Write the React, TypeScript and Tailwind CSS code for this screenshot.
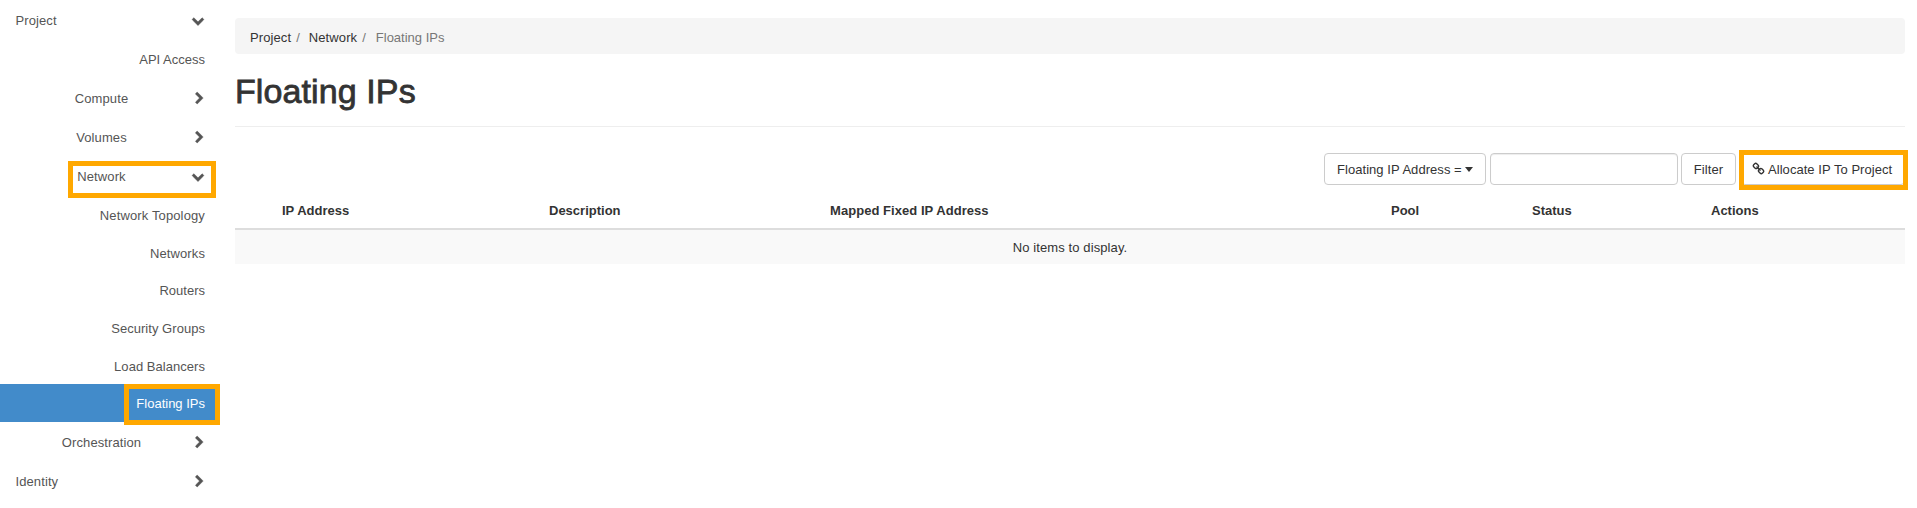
import type { ReactNode } from "react";

const CHEVRON_DOWN =
  "M1683 808l-742 741q-19 19-45 19t-45-19l-742-741q-19-19-19-45.500t19-45.500l166-165q19-19 45-19t45 19l531 531 531-531q19-19 45-19t45 19l166 165q19 19 19 45.500t-19 45.500z";
const CHEVRON_RIGHT =
  "M1363 877l-742 742q-19 19-45 19t-45-19l-166-166q-19-19-19-45t19-45l531-531-531-531q-19-19-19-45t19-45l166-166q19-19 45-19t45 19l742 742q19 19 19 45t-19 45z";
const LINK =
  "M1520 1216q0-40-28-68l-208-208q-28-28-68-28-42 0-72 32 3 3 19 18.500t21.500 21.500 15 19 13 25.500 3.500 27.500q0 40-28 68t-68 28q-15 0-27.500-3.500t-25.500-13-19-15-21.500-21.500-18.500-19q-33 31-33 73 0 40 28 68l206 207q27 27 68 27 40 0 68-26l147-146q28-28 28-67zm-703-705q0-40-28-68l-206-207q-28-28-68-28-39 0-68 27l-147 146q-28 28-28 67 0 40 28 68l208 208q27 27 68 27 42 0 72-31-3-3-19-18.500t-21.500-21.500-15-19-13-25.500-3.500-27.500q0-40 28-68t68-28q15 0 27.500 3.500t25.500 13 19 15 21.500 21.500 18.500 19q33-31 33-73zm895 705q0 120-85 203l-147 146q-83 83-203 83-121 0-204-85l-206-207q-83-83-83-203 0-123 88-209l-88-88q-86 88-208 88-120 0-204-84l-208-208q-84-84-84-204t85-203l147-146q83-83 203-83 121 0 204 85l206 207q83 83 83 203 0 123-88 209l88 88q86-88 208-88 120 0 204 84l208 208q84 84 84 204z";

function Icon({ d, className = "" }: { d: string; className?: string }) {
  return (
    <svg viewBox="0 0 1792 1792" className={`size-[13px] shrink-0 overflow-visible fill-current ${className}`} aria-hidden="true">
      <path d={d} />
    </svg>
  );
}

function Highlight({ className }: { className: string }) {
  return <span className={`pointer-events-none absolute border-5 border-[#ffa800] ${className}`} />;
}

function Section({
  label,
  level,
  open = false,
  children,
}: {
  label: string;
  level: "root" | "group";
  open?: boolean;
  children?: ReactNode;
}) {
  return (
    <a
      className={`relative flex h-[39px] items-center pr-[15px] tracking-[0.1px] ${level === "root" ? "pl-[15.5px]" : "pl-[13px]"}`}
    >
      <span className={level === "root" ? "flex-1" : "flex-1 pr-0.5 text-center"}>{label}</span>
      <Icon
        d={open ? CHEVRON_DOWN : CHEVRON_RIGHT}
        className={`stroke-current stroke-[60] ${open ? "-translate-x-[0.5px]" : "translate-x-px"}`}
      />
      {children}
    </a>
  );
}

function Leaf({ label, className }: { label: string; className: string }) {
  return <a className={`flex items-center justify-end pr-[15px] ${className}`}>{label}</a>;
}

function Sidebar() {
  return (
    <nav className="flex w-[220px] shrink-0 flex-col pt-px text-[#555]">
      <Section label="Project" level="root" open />
      <Leaf label="API Access" className="h-[39px]" />
      <Section label="Compute" level="group" />
      <Section label="Volumes" level="group" />
      <Section label="Network" level="group" open>
        <Highlight className="top-[4px] left-[68px] h-[37px] w-[148px]" />
      </Section>
      <Leaf label="Network Topology" className="h-[39px] tracking-[0.13px]" />
      <Leaf label="Networks" className="h-[37px] tracking-[0.1px]" />
      <Leaf label="Routers" className="h-[37px]" />
      <Leaf label="Security Groups" className="h-[38px] pt-0.5 tracking-[0.04px]" />
      <Leaf label="Load Balancers" className="h-[37px] pt-0.5 tracking-[0.04px]" />
      <a className="relative flex h-[38px] items-center justify-end bg-[#428bca] pt-0.5 pr-[15px] text-white">
        Floating IPs
        <Highlight className="top-0 right-0 h-[41px] w-[96px]" />
      </a>
      <div className="mt-px">
        <Section label="Orchestration" level="group" />
        <Section label="Identity" level="root" />
      </div>
    </nav>
  );
}

const BUTTON = "flex h-8 items-center rounded-[4px] border border-[#ccc] bg-white pt-px whitespace-nowrap";

function Toolbar() {
  return (
    <div className="mt-[26px] flex justify-end">
      <button className={`${BUTTON} w-[162px] pl-[12px] tracking-[0.05px]`}>
        Floating IP Address =
        <span className="ml-[3px] border-x-4 border-t-[5px] border-x-transparent border-t-[#333]" />
      </button>
      <input className="ml-1 h-8 w-[188px] rounded-[4px] border border-[#ccc] px-3 shadow-[inset_0_1px_1px_rgba(0,0,0,0.075)]" />
      <button className={`${BUTTON} ml-[3px] w-[55px] justify-center tracking-[0.1px]`}>Filter</button>
      <button className={`${BUTTON} relative ml-[5px] w-[164px] pl-[10px] tracking-[0.05px]`}>
        <Icon d={LINK} className="mr-[3px] -translate-y-[0.5px]" />
        Allocate IP To Project
        <Highlight className="-top-[4px] -left-[3px] h-[40px] w-[169px]" />
      </button>
    </div>
  );
}

function FloatingIpTable() {
  return (
    <table className="mt-[7px] w-full table-fixed border-collapse">
      <colgroup>
        <col className="w-[39px]" />
        <col className="w-[267px]" />
        <col className="w-[281px]" />
        <col className="w-[561px]" />
        <col className="w-[141px]" />
        <col className="w-[179px]" />
        <col />
      </colgroup>
      <thead>
        <tr className="h-[37px] border-b-2 border-[#ddd] text-left">
          <th />
          <th className="px-2 pt-0.5">IP Address</th>
          <th className="px-2 pt-0.5">Description</th>
          <th className="px-2 pt-0.5 tracking-[0.05px]">Mapped Fixed IP Address</th>
          <th className="px-2 pt-0.5">Pool</th>
          <th className="px-2 pt-0.5">Status</th>
          <th className="px-2 pt-0.5">Actions</th>
        </tr>
      </thead>
      <tbody>
        <tr className="h-[35px] bg-[#f9f9f9]">
          <td colSpan={7} className="pt-0.5 text-center tracking-[0.1px]">
            No items to display.
          </td>
        </tr>
      </tbody>
    </table>
  );
}

export default function App() {
  return (
    <div className="flex h-[508px] overflow-hidden bg-white font-['Liberation_Sans',Arial,sans-serif] text-[13px] leading-[18px] text-[#333]">
      <Sidebar />
      <main className="min-w-0 flex-1 pt-[18px] pr-3 pl-[15px]">
        <ol className="flex h-9 items-center rounded-[4px] bg-[#f5f5f5] pt-[3px] pl-[15px]">
          <li className="tracking-[0.1px]">Project</li>
          <li className="pr-[9px] pl-[5px] text-[#777]">/</li>
          <li className="tracking-[0.1px]">Network</li>
          <li className="pr-[10px] pl-[5px] text-[#777]">/</li>
          <li className="text-[#777]">Floating IPs</li>
        </ol>
        <header className="flex h-[73px] items-center border-b border-[#eee] pt-0.5">
          <h1 className="text-[34px] leading-[37px] tracking-[0.1px] [-webkit-text-stroke:0.8px_#333]">Floating IPs</h1>
        </header>
        <Toolbar />
        <FloatingIpTable />
      </main>
    </div>
  );
}
